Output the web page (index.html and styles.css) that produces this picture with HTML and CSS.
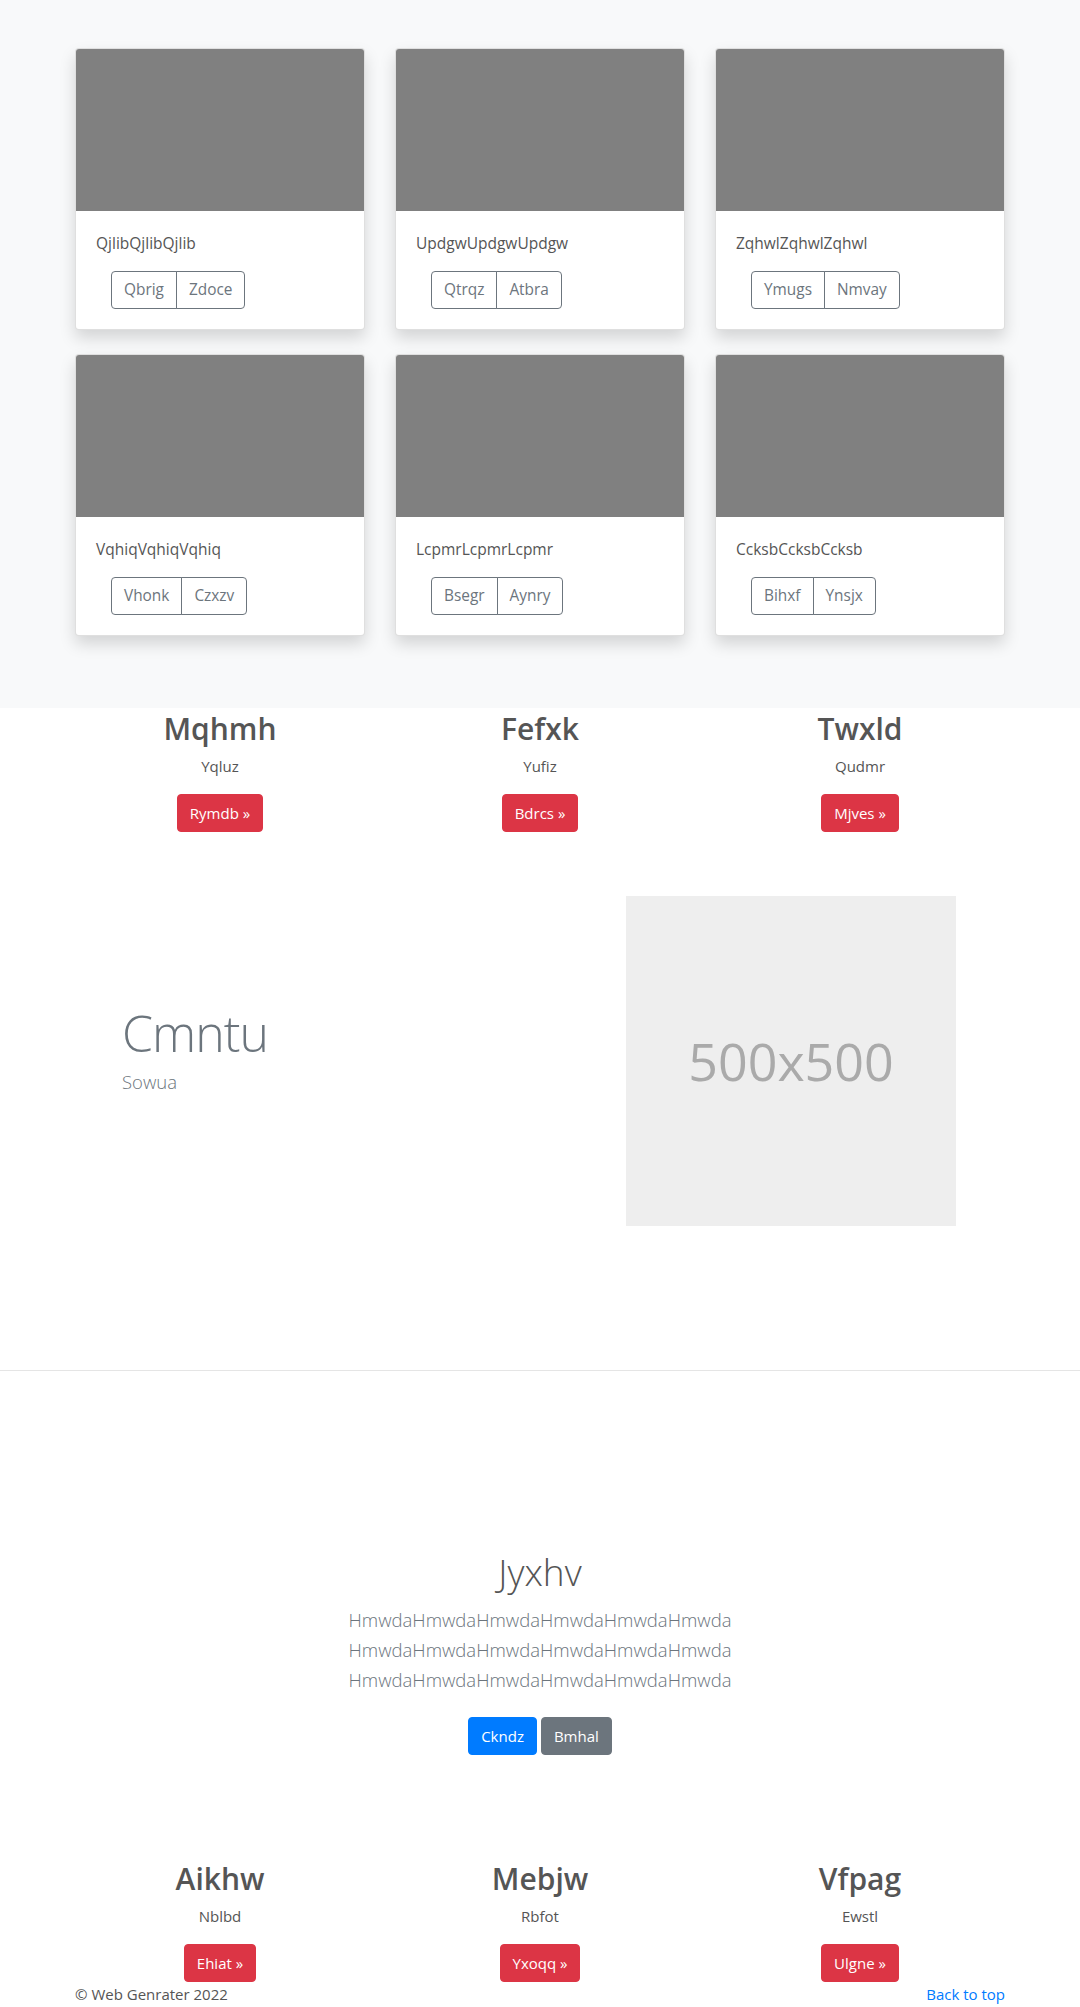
FILE: index.html
```html
<!DOCTYPE html>
<html lang="en">
<head>
<meta charset="utf-8">
<title>Page</title>
<link rel="stylesheet" href="styles.css">
</head>
<body>
<main>
  <section class="album">
    <div class="container">
      <div class="card-grid">
        <div class="card">
          <div class="card-img"></div>
          <div class="card-body">
            <p class="card-text">QjlibQjlibQjlib</p>
            <div class="btn-group"><button class="btn btn-outline">Qbrig</button><button class="btn btn-outline">Zdoce</button></div>
          </div>
        </div>
        <div class="card">
          <div class="card-img"></div>
          <div class="card-body">
            <p class="card-text">UpdgwUpdgwUpdgw</p>
            <div class="btn-group"><button class="btn btn-outline">Qtrqz</button><button class="btn btn-outline">Atbra</button></div>
          </div>
        </div>
        <div class="card">
          <div class="card-img"></div>
          <div class="card-body">
            <p class="card-text">ZqhwlZqhwlZqhwl</p>
            <div class="btn-group"><button class="btn btn-outline">Ymugs</button><button class="btn btn-outline">Nmvay</button></div>
          </div>
        </div>
        <div class="card">
          <div class="card-img"></div>
          <div class="card-body">
            <p class="card-text">VqhiqVqhiqVqhiq</p>
            <div class="btn-group"><button class="btn btn-outline">Vhonk</button><button class="btn btn-outline">Czxzv</button></div>
          </div>
        </div>
        <div class="card">
          <div class="card-img"></div>
          <div class="card-body">
            <p class="card-text">LcpmrLcpmrLcpmr</p>
            <div class="btn-group"><button class="btn btn-outline">Bsegr</button><button class="btn btn-outline">Aynry</button></div>
          </div>
        </div>
        <div class="card">
          <div class="card-img"></div>
          <div class="card-body">
            <p class="card-text">CcksbCcksbCcksb</p>
            <div class="btn-group"><button class="btn btn-outline">Bihxf</button><button class="btn btn-outline">Ynsjx</button></div>
          </div>
        </div>
      </div>
    </div>
  </section>

  <section class="features features-top">
    <div class="feature">
      <h2 class="feature-title">Mqhmh</h2>
      <p class="feature-text">Yqluz</p>
      <a class="btn btn-danger" href="#">Rymdb &raquo;</a>
    </div>
    <div class="feature">
      <h2 class="feature-title">Fefxk</h2>
      <p class="feature-text">Yufiz</p>
      <a class="btn btn-danger" href="#">Bdrcs &raquo;</a>
    </div>
    <div class="feature">
      <h2 class="feature-title">Twxld</h2>
      <p class="feature-text">Qudmr</p>
      <a class="btn btn-danger" href="#">Mjves &raquo;</a>
    </div>
  </section>

  <section class="featurette">
    <div class="featurette-text">
      <h2 class="featurette-heading">Cmntu</h2>
      <p class="lead muted">Sowua</p>
    </div>
    <div class="placeholder">500x500</div>
  </section>

  <hr class="divider">

  <section class="jumbo">
    <h1 class="jumbo-heading">Jyxhv</h1>
    <p class="lead muted jumbo-lead">HmwdaHmwdaHmwdaHmwdaHmwdaHmwda<br>HmwdaHmwdaHmwdaHmwdaHmwdaHmwda<br>HmwdaHmwdaHmwdaHmwdaHmwdaHmwda</p>
    <div class="jumbo-actions">
      <a class="btn btn-primary" href="#">Ckndz</a>
      <a class="btn btn-secondary" href="#">Bmhal</a>
    </div>
  </section>

  <section class="features features-bottom">
    <div class="feature">
      <h2 class="feature-title">Aikhw</h2>
      <p class="feature-text">Nblbd</p>
      <a class="btn btn-danger" href="#">Ehiat &raquo;</a>
    </div>
    <div class="feature">
      <h2 class="feature-title">Mebjw</h2>
      <p class="feature-text">Rbfot</p>
      <a class="btn btn-danger" href="#">Yxoqq &raquo;</a>
    </div>
    <div class="feature">
      <h2 class="feature-title">Vfpag</h2>
      <p class="feature-text">Ewstl</p>
      <a class="btn btn-danger" href="#">Ulgne &raquo;</a>
    </div>
  </section>
</main>

<footer class="footer">
  <p class="copy">&copy; Web Genrater 2022</p>
  <a class="back" href="#">Back to top</a>
</footer>
</body>
</html>
```

FILE: styles.css
```css
* { box-sizing: border-box; }

html, body {
  margin: 0;
  padding: 0;
}

body {
  font-family: "Open Sans", "Noto Sans", "DejaVu Sans", sans-serif;
  font-size: 15px;
  line-height: 24px;
  color: #555;
  background: #fff;
}

p { margin: 0; }

/* ---------- album ---------- */
.album {
  background: #f8f9fa;
  padding: 48px 0;
}

.container {
  width: 930px;
  margin: 0 auto;
}

.card-grid {
  display: grid;
  grid-template-columns: repeat(3, 290px);
  column-gap: 30px;
  row-gap: 24px;
  padding-bottom: 24px;
}

.card {
  background: #fff;
  border: 1px solid rgba(0, 0, 0, 0.125);
  border-radius: 4px;
  box-shadow: 0 8px 16px rgba(0, 0, 0, 0.15);
  overflow: hidden;
}

.card-img {
  height: 162px;
  background: #808080;
}

.card-body {
  padding: 20px;
}

.card-text {
  margin-bottom: 16px;
  font-size: 15.5px;
}

.btn-group {
  display: inline-flex;
  margin-left: 15px;
}

/* ---------- buttons ---------- */
.btn {
  display: inline-block;
  font-family: inherit;
  font-size: 15px;
  line-height: 24px;
  padding: 6px 12px;
  border: 1px solid transparent;
  border-radius: 4px;
  text-decoration: none;
  background: transparent;
  cursor: pointer;
  vertical-align: middle;
}

.btn-outline {
  color: #6c757d;
  border-color: #6c757d;
  font-size: 15.4px;
}

.btn-group .btn-outline:first-child {
  border-top-right-radius: 0;
  border-bottom-right-radius: 0;
}

.btn-group .btn-outline + .btn-outline {
  margin-left: -1px;
  border-top-left-radius: 0;
  border-bottom-left-radius: 0;
}

.btn-danger {
  color: #fff;
  background: #dc3545;
  border-color: #dc3545;
}

.btn-primary {
  color: #fff;
  background: #007bff;
  border-color: #007bff;
}

.btn-secondary {
  color: #fff;
  background: #6c757d;
  border-color: #6c757d;
}

/* ---------- features ---------- */
.features {
  width: 960px;
  margin: 0 auto;
  display: grid;
  grid-template-columns: repeat(3, 1fr);
  text-align: center;
}

.features-top {
  padding-top: 2px;
}

.features-bottom {
  margin-top: 105px;
}

.feature-title {
  margin: 0 0 6px;
  font-size: 30px;
  line-height: 38.4px;
  font-weight: 600;
  color: #555;
}

.feature-text {
  margin-bottom: 16px;
}

/* ---------- featurette ---------- */
.featurette {
  width: 930px;
  margin: 64px auto 0;
  padding: 0 49px 0 47px;
  display: flex;
  align-items: center;
  justify-content: space-between;
}

.featurette-heading {
  margin: 0 0 6px;
  font-size: 50px;
  line-height: 56px;
  font-weight: 300;
  letter-spacing: -1px;
  color: #6c757d;
}

.lead {
  font-size: 18.5px;
  line-height: 30px;
  font-weight: 300;
}

.muted { color: #6c757d; }

.featurette-text .lead {
  margin-bottom: 21px;
}

.placeholder {
  width: 330px;
  height: 330px;
  background: #eee;
  color: #aaa;
  display: flex;
  align-items: center;
  justify-content: center;
  font-size: 52px;
  font-weight: 400;
}

.divider {
  margin: 144px 0 0;
  border: 0;
  border-top: 1px solid rgba(0, 0, 0, 0.1);
  height: 0;
}

/* ---------- jumbotron ---------- */
.jumbo {
  text-align: center;
  padding-top: 179px;
}

.jumbo-heading {
  margin: 0 0 10px;
  font-size: 37px;
  line-height: 44.4px;
  font-weight: 300;
  color: #555;
}

.jumbo-lead {
  margin-bottom: 22px;
}

.jumbo-actions {
  display: flex;
  justify-content: center;
  gap: 4px;
}

/* ---------- footer ---------- */
.footer {
  width: 930px;
  margin: 0 auto;
  display: flex;
  justify-content: space-between;
  align-items: flex-start;
}

.back {
  color: #007bff;
  text-decoration: none;
}
```
